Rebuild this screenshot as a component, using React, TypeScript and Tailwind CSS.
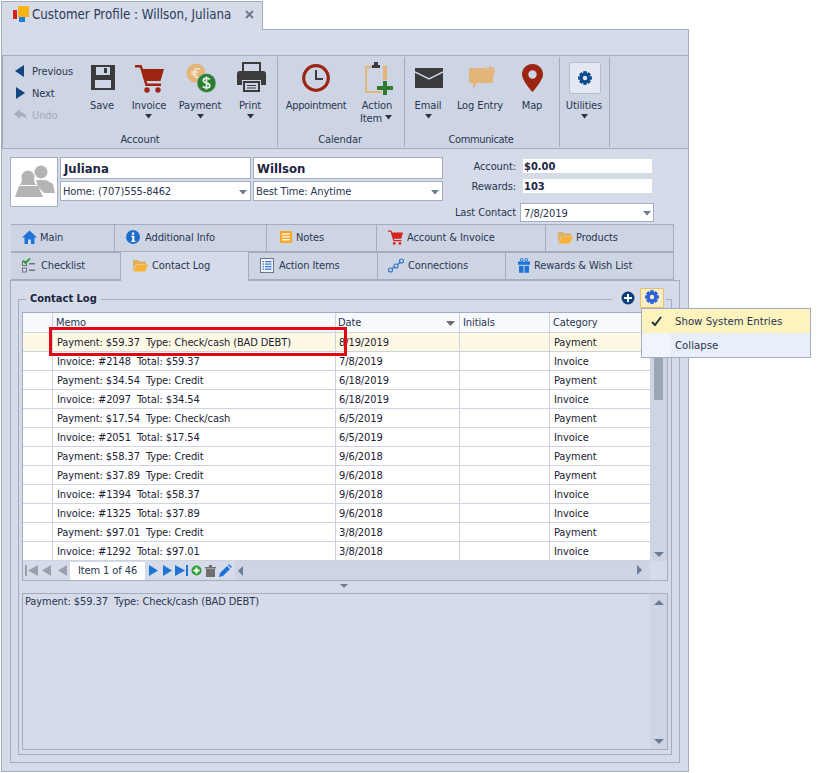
import React from "react";

const Svg = ({ x, y, w, h, children }: { x: number; y: number; w: number; h: number; children: React.ReactNode }) => (
  <svg className="absolute" style={{ left: x, top: y }} width={w} height={h} viewBox={`0 0 ${w} ${h}`}>
    {children}
  </svg>
);

const Gear = ({ x, y, s, c, hole }: { x: number; y: number; s: number; c: string; hole: string }) => {
  const teeth = [0, 45, 90, 135, 180, 225, 270, 315];
  return (
    <Svg x={x} y={y} w={s} h={s}>
      <g transform={`scale(${s / 16})`}>
        {teeth.map((a) => (
          <rect key={a} x="6.200" y="0.400" width="3.600" height="15.200" fill={c} transform={`rotate(${a} 8 8)`} />
        ))}
        <circle cx="8" cy="8" r="5.600" fill={c} />
        <circle cx="8" cy="8" r="2.500" fill={hole} />
      </g>
    </Svg>
  );
};

const Caret = ({ x, y }: { x: number; y: number }) => (
  <Svg x={x} y={y} w={9} h={5}>
    <path d="M1 0h7L4.500 4.500z" fill="#2a3346" />
  </Svg>
);

const DropCaret = ({ x, y }: { x: number; y: number }) => (
  <Svg x={x} y={y} w={9} h={5}>
    <path d="M0 0h8L4 4.500z" fill="#6d7b94" />
  </Svg>
);

const Label = ({ x, y, tight, children }: { x: number; y: number; tight?: boolean; children: React.ReactNode }) => (
  <div className={`absolute -translate-x-1/2 whitespace-nowrap leading-[14px] ${tight ? "tracking-[-0.35px]" : ""}`} style={{ left: x, top: y + 1 }}>
    {children}
  </div>
);

const rows: [string, string, string][] = [
  ["Invoice: #2148  Total: $59.37", "7/8/2019", "Invoice"],
  ["Payment: $34.54  Type: Credit", "6/18/2019", "Payment"],
  ["Invoice: #2097  Total: $34.54", "6/18/2019", "Invoice"],
  ["Payment: $17.54  Type: Check/cash", "6/5/2019", "Payment"],
  ["Invoice: #2051  Total: $17.54", "6/5/2019", "Invoice"],
  ["Payment: $58.37  Type: Credit", "9/6/2018", "Payment"],
  ["Payment: $37.89  Type: Credit", "9/6/2018", "Payment"],
  ["Invoice: #1394  Total: $58.37", "9/6/2018", "Invoice"],
  ["Invoice: #1325  Total: $37.89", "9/6/2018", "Invoice"],
  ["Payment: $97.01  Type: Credit", "3/8/2018", "Payment"],
  ["Invoice: #1292  Total: $97.01", "3/8/2018", "Invoice"],
];

const Row = ({ r, hi }: { r: [string, string, string]; hi?: boolean }) => (
  <div className={`grid h-[19px] grid-cols-[30px_283px_124px_90px_101px] border-b border-[#cdd3e0] leading-[19px] text-[#1b2233] ${hi ? "bg-[#fef9e4]" : "bg-white"}`}>
    <div className="border-r border-[#cdd3e0]" />
    <div className="whitespace-pre border-r border-[#cdd3e0] pl-[4px]">{r[0]}</div>
    <div className="border-r border-[#cdd3e0] pl-[3px]">{r[1]}</div>
    <div className="border-r border-[#cdd3e0]" />
    <div className="pl-[4px]">{r[2]}</div>
  </div>
);

const tabBase = "relative flex h-[28px] items-center border border-l-0 border-[#a3adbf] bg-[#cdd5e5] pb-[2px] text-[#2a3550]";
const tabText = "relative top-[1px]";

const House = () => (
  <svg width="15" height="14" viewBox="0 0 15 14"><path d="M7.500 0.500 15 7.500h-2.500V14H9V9.500H6V14H2.500V7.500H0z" fill="#1e73d6" /></svg>
);
const Info = () => (
  <svg width="14" height="14" viewBox="0 0 14 14"><circle cx="7" cy="7" r="7" fill="#1e6fc9" /><rect x="6" y="2.500" width="2.200" height="2.200" fill="#fff" /><path d="M5.300 5.800h3v5h1v1.200H5.300v-1.200h1v-3.800h-1z" fill="#fff" /></svg>
);
const Notes = () => (
  <svg width="12" height="12" viewBox="0 0 12 12"><rect width="12" height="12" fill="#f9a825" /><rect x="2" y="2.500" width="8" height="1.300" fill="#fff" /><rect x="2" y="5.300" width="8" height="1.300" fill="#fff" /><rect x="2" y="8.100" width="8" height="1.300" fill="#fff" /></svg>
);
const Cart = ({ s, c }: { s: number; c: string }) => (
  <svg width={s} height={s} viewBox="0 0 29 29">
    <path d="M0 1h6.500l1.500 4H29l-3.500 12H11.500l.8 2.500H26v2.400H10.500L5 3.500H0z" fill={c} />
    <circle cx="12" cy="26" r="2.700" fill={c} /><circle cx="23" cy="26" r="2.700" fill={c} />
  </svg>
);
const Folder = () => (
  <svg width="15" height="13" viewBox="0 0 15 13"><path d="M0 1h5l1.500 1.500H13V5H3L0 12z" fill="#e0b060" /><path d="M3.500 5.500H15L12 12.500H0.500z" fill="#f9b233" /></svg>
);
const Check = () => (
  <svg width="14" height="15" viewBox="0 0 14 15">
    <rect x="0.500" y="3.500" width="4" height="4" fill="none" stroke="#6f7682" /><rect x="0.500" y="10" width="4" height="4" fill="none" stroke="#6f7682" />
    <rect x="7" y="5" width="6" height="1.500" fill="#6f7682" /><rect x="7" y="11.500" width="6" height="1.500" fill="#6f7682" />
    <path d="M1 2.500l2.500 2.500L8 0.500" fill="none" stroke="#2e9e34" strokeWidth="1.800" />
  </svg>
);
const ListIcon = () => (
  <svg width="14" height="15" viewBox="0 0 14 15">
    <rect x="0.500" y="0.500" width="13" height="14" fill="#eef1f7" stroke="#6f7682" />
    {[3, 5.500, 8, 10.500].map((y) => (<g key={y}><rect x="2.500" y={y} width="1.500" height="1.200" fill="#3578c9" /><rect x="5" y={y} width="6.500" height="1.200" fill="#3578c9" /></g>))}
  </svg>
);
const Conn = () => (
  <svg width="16" height="15" viewBox="0 0 16 15" fill="none" stroke="#2f6fc0" strokeWidth="1.100">
    <circle cx="2.500" cy="12" r="2" /><circle cx="8" cy="8" r="2" /><circle cx="13.500" cy="3" r="2" /><path d="M4 10.500l2.500-1.500M9.500 6.500l2.500-2" />
  </svg>
);
const Gift = () => (
  <svg width="12" height="15" viewBox="0 0 12 15"><rect y="3.500" width="12" height="3.300" fill="#1e73d6" /><rect x="1" y="7.800" width="4.500" height="7" fill="#1e73d6" /><rect x="6.500" y="7.800" width="4.500" height="7" fill="#1e73d6" /><circle cx="3.700" cy="1.800" r="1.400" fill="none" stroke="#1e73d6" /><circle cx="8.300" cy="1.800" r="1.400" fill="none" stroke="#1e73d6" /></svg>
);

const Tri = ({ dir, c, bar }: { dir: "l" | "r"; c: string; bar?: boolean }) => (
  <svg width={bar ? 13 : 11} height="13" viewBox={`0 0 ${bar ? 13 : 11} 13`}>
    {dir === "l" ? (
      <>
        {bar && <rect x="0" y="1" width="2" height="11" fill={c} />}
        <path d={bar ? "M13 1v11L3 6.500z" : "M10 1v11L1 6.500z"} fill={c} />
      </>
    ) : (
      <>
        <path d={bar ? "M0 1v11l10-5.500z" : "M1 1v11l9-5.500z"} fill={c} />
        {bar && <rect x="11" y="1" width="2" height="11" fill={c} />}
      </>
    )}
  </svg>
);

export default function App() {
  return (
    <div className="relative h-[773px] w-[830px] overflow-hidden bg-white [font-family:DejaVu_Sans_Condensed,DejaVu_Sans,sans-serif] text-[11px] tracking-[-0.1px] text-[#2a3550]">
      {/* window */}
      <div className="absolute left-[1px] top-[29px] h-[743px] w-[688px] border border-[#a3adbf] bg-[#d5dbe9]" />
      {/* title tab */}
      <div className="absolute left-[1px] top-[1px] flex h-[29px] w-[262px] items-center border border-b-0 border-[#a3adbf] bg-[#d5dbe9] pb-[2px] pl-[30px] text-[13.200px] tracking-normal text-[#2c3a58]">
        <span>Customer Profile : Willson, Juliana</span>
      </div>
      <Svg x={13} y={6} w={17} h={17}>
        <rect x="0" y="4" width="4" height="9" fill="#d4231c" /><rect x="5" y="0" width="11" height="11" fill="#fcb316" /><rect x="6" y="11" width="6" height="5" fill="#1f7fd8" />
      </Svg>
      <Svg x={245} y={10} w={10} h={10}>
        <path d="M1 1l7 7M8 1l-7 7" stroke="#6f7a8f" strokeWidth="2" />
      </Svg>

      {/* ribbon */}
      <div className="absolute left-[2px] top-[55px] h-[94px] w-[686px] border-y border-[#a3adbf] bg-[#cdd5e5]" />
      <div className="absolute left-[2px] top-[56px] h-[92px] w-[1px] bg-[#a3adbf]" />
      <div className="absolute left-[277px] top-[57px] h-[90px] w-[1px] bg-[#a3adbf]" />
      <div className="absolute left-[404px] top-[57px] h-[90px] w-[1px] bg-[#a3adbf]" />
      <div className="absolute left-[559px] top-[57px] h-[90px] w-[1px] bg-[#a3adbf]" />
      <div className="absolute left-[609px] top-[57px] h-[90px] w-[1px] bg-[#a3adbf]" />

      <Svg x={15} y={65} w={10} h={12}><path d="M9 0v12L0 6z" fill="#13467f" /></Svg>
      <div className="absolute left-[32px] top-[65px] leading-[14px]">Previous</div>
      <Svg x={16} y={87} w={10} h={12}><path d="M0 0v12l9-6z" fill="#13467f" /></Svg>
      <div className="absolute left-[32px] top-[87px] leading-[14px]">Next</div>
      <Svg x={14} y={109} w={13} h={11}><path d="M6 0v3c4 0 6 3 7 7-2-2-4-3-7-3v3L0 5z" fill="#a6adbb" /></Svg>
      <div className="absolute left-[32px] top-[109px] leading-[14px] text-[#a0a8b8]">Undo</div>

      {/* Save */}
      <Svg x={91} y={65} w={24} h={25}>
        <path d="M0 0h24v25H0z" fill="#3b3b3b" /><rect x="5" y="2" width="14" height="8" fill="#cdd5e5" /><rect x="13" y="3" width="3" height="5" fill="#3b3b3b" /><rect x="4" y="15" width="16" height="8" fill="#cdd5e5" />
      </Svg>
      <Label x={102} y={98}>Save</Label>
      {/* Invoice */}
      <div className="absolute left-[135px] top-[64px]"><Cart s={29} c="#9c2410" /></div>
      <Label x={149} y={98}>Invoice</Label>
      <Caret x={144} y={114} />
      {/* Payment */}
      <Svg x={186} y={63} w={30} h={30}>
        <circle cx="10" cy="10" r="9.500" fill="#e2b578" /><path d="M14 6c-3-1.500-6 0-6 4s3 5.500 6 4M5 9h7M5 11.500h6" fill="none" stroke="#f4e8d4" strokeWidth="1.500" />
        <circle cx="20.500" cy="20" r="9.500" fill="#2d7d32" stroke="#cdd5e5" strokeWidth="0.500" />
        <path d="M24 16.500c-1-1-2-1.300-3.500-1.300-2 0-3.200 1-3.200 2.400 0 3.200 6.500 1.800 6.500 4.900 0 1.400-1.300 2.400-3.300 2.400-1.600 0-2.900-.5-3.800-1.500M20.500 13.500v13" fill="none" stroke="#e7f1e8" strokeWidth="1.700" />
      </Svg>
      <Label x={200} y={98}>Payment</Label>
      <Caret x={196} y={114} />
      {/* Print */}
      <Svg x={237} y={62} w={29} h={30}>
        <path d="M5 0h19v9h-2V2H7v7H5z" fill="#3b3b3b" />
        <path d="M3 9h23a3 3 0 0 1 3 3v11h-5v-5H5v5H0V12a3 3 0 0 1 3-3z" fill="#3b3b3b" />
        <path d="M6 19h17v11H6z" fill="#3b3b3b" /><rect x="8" y="21" width="13" height="7" fill="#cdd5e5" /><rect x="10" y="23" width="9" height="1" fill="#3b3b3b" /><rect x="10" y="25.500" width="9" height="1" fill="#3b3b3b" />
      </Svg>
      <Label x={250} y={98}>Print</Label>
      <Caret x={246} y={114} />
      {/* Appointment */}
      <Svg x={302} y={64} w={28} h={28}>
        <circle cx="14" cy="14" r="12.300" fill="none" stroke="#9c2410" strokeWidth="3.200" />
        <path d="M14 6v9h7" fill="none" stroke="#3b3b3b" strokeWidth="2" />
      </Svg>
      <Label x={316} y={98} tight>Appointment</Label>
      {/* Action item */}
      <Svg x={365} y={62} w={28} h={33}>
        <path d="M0 4h7v2H2v23h15v2H0z" fill="#e2b578" /><path d="M18 4h4v14h-4z" fill="#e2b578" />
        <path d="M7 6V3h2V0h4v3h2v3z" fill="#3b3b3b" />
        <path d="M18 19h4v5h6v4h-6v5h-4v-5h-6v-4h6z" fill="#2d7d32" />
      </Svg>
      <Label x={377} y={98}>Action</Label>
      <Label x={371} y={111}>Item</Label>
      <Caret x={384} y={115} />
      {/* Email */}
      <Svg x={415} y={68} w={28} h={20}>
        <path d="M0 0h28v20H0z" fill="#3b3b3b" /><path d="M0 4l14 7 14-7" fill="none" stroke="#cdd5e5" strokeWidth="1.500" />
      </Svg>
      <Label x={428} y={98}>Email</Label>
      <Caret x={424} y={114} />
      {/* Log entry */}
      <Svg x={469} y={65} w={28} h={25}>
        <path d="M0 3h16c0 5 3 7 8 7v8H8l-4 6v-6H0z" fill="#e2b578" />
        <path d="M21 0l1.500 3 3-1-1 3 3 1.500-3 1.500 1 3-3-1L21 13l-1.500-3-3 1 1-3-3-1.500 3-1.500-1-3 3 1z" fill="#e2b578" />
      </Svg>
      <Label x={480} y={98}>Log Entry</Label>
      {/* Map */}
      <Svg x={522} y={64} w={21} h={28}>
        <path fillRule="evenodd" d="M10.500 0C4.700 0 0 4.500 0 10.300 0 17 10.500 28 10.500 28S21 17 21 10.300C21 4.500 16.300 0 10.500 0zm0 6.300a4.200 4.200 0 1 1 0 8.400 4.200 4.200 0 0 1 0-8.400z" fill="#9c2410" />
      </Svg>
      <Label x={532} y={98}>Map</Label>
      {/* Utilities */}
      <div className="absolute left-[569px] top-[62px] h-[32px] w-[32px] rounded-[2px] border border-[#b8bfca] bg-[#e3e8f2]" />
      <Gear x={578} y={71} s={14} c="#0f4c92" hole="#e3e8f2" />
      <Label x={584} y={98}>Utilities</Label>
      <Caret x={580} y={114} />

      <Label x={140} y={132}>Account</Label>
      <Label x={340} y={132}>Calendar</Label>
      <Label x={481} y={132} tight>Communicate</Label>

      {/* customer */}
      <div className="absolute left-[10px] top-[157px] h-[50px] w-[48px] border border-[#a3adbf] bg-white">
        <svg className="absolute left-[3px] top-[5px]" width="41" height="37" viewBox="0 0 41 37">
          <circle cx="27" cy="9" r="6.500" fill="#b4b4b4" /><path d="M22 17h10l7 4 2 9H30l-6-6z" fill="#b4b4b4" />
          <circle cx="14" cy="14" r="6.500" fill="#b4b4b4" /><path d="M8 15c0 4-1 6-3 7h18c-2-1-3-3-3-7z" fill="#b4b4b4" /><path d="M5 23h19l5 11H1z" fill="#b4b4b4" />
        </svg>
      </div>
      <div className="absolute left-[60px] top-[157px] h-[22px] w-[191px] border border-[#a3adbf] bg-white pl-[3px] text-[13px] font-bold leading-[21px] tracking-normal text-[#1c2540]">Juliana</div>
      <div className="absolute left-[253px] top-[157px] h-[22px] w-[190px] border border-[#a3adbf] bg-white pl-[3px] text-[13px] font-bold leading-[21px] tracking-normal text-[#1c2540]">Willson</div>
      <div className="absolute left-[60px] top-[181px] h-[20px] w-[191px] border border-[#a3adbf] bg-white pl-[2px] leading-[20px]">Home: (707)555-8462</div>
      <DropCaret x={239} y={190} />
      <div className="absolute left-[253px] top-[181px] h-[20px] w-[190px] border border-[#a3adbf] bg-white pl-[2px] leading-[20px]">Best Time: Anytime</div>
      <DropCaret x={431} y={190} />

      <div className="absolute right-[314px] top-[160px] leading-[14px]">Account:</div>
      <div className="absolute left-[523px] top-[159px] h-[14px] w-[129px] bg-white pl-[1px] font-bold leading-[15px] tracking-normal text-[#1c2540]">$0.00</div>
      <div className="absolute right-[314px] top-[180px] leading-[14px]">Rewards:</div>
      <div className="absolute left-[523px] top-[179px] h-[14px] w-[129px] bg-white pl-[1px] font-bold leading-[15px] tracking-normal text-[#1c2540]">103</div>
      <div className="absolute right-[314px] top-[206px] leading-[14px]">Last Contact</div>
      <div className="absolute left-[520px] top-[203px] h-[19px] w-[134px] border border-[#a3adbf] bg-white pl-[3px] leading-[19px]">7/8/2019</div>
      <DropCaret x={643} y={211} />

      {/* tabs */}
      <div className="absolute left-[11px] top-[224px] flex w-[663px] flex-col">
        <div className="flex">
          <div className={`${tabBase} w-[104px] border-l pl-[11px]`}><House /><span className={`${tabText} ml-[3px]`}>Main</span></div>
          <div className={`${tabBase} w-[152px] pl-[11px]`}><Info /><span className={`${tabText} ml-[5px]`}>Additional Info</span></div>
          <div className={`${tabBase} w-[110px] pl-[13px]`}><Notes /><span className={`${tabText} ml-[4px]`}>Notes</span></div>
          <div className={`${tabBase} w-[169px] pl-[11px]`}><Cart s={15} c="#d6251c" /><span className={`${tabText} ml-[4px]`}>Account & Invoice</span></div>
          <div className={`${tabBase} w-[128px] pl-[12px]`}><Folder /><span className={`${tabText} ml-[3px]`}>Products</span></div>
        </div>
        <div className="flex">
          <div className={`${tabBase} w-[110px] border-l pl-[11px]`}><Check /><span className={`${tabText} ml-[5px]`}>Checklist</span></div>
          <div className="relative z-10 flex h-[29px] w-[128px] items-center border-r border-[#a3adbf] bg-[#d5dbe9] pb-[3px] pl-[12px]"><Folder /><span className={`${tabText} ml-[4px]`}>Contact Log</span></div>
          <div className={`${tabBase} w-[129px] pl-[11px]`}><ListIcon /><span className={`${tabText} ml-[5px]`}>Action Items</span></div>
          <div className={`${tabBase} w-[128px] pl-[10px]`}><Conn /><span className={`${tabText} ml-[4px]`}>Connections</span></div>
          <div className={`${tabBase} w-[168px] pl-[12px]`}><Gift /><span className={`${tabText} ml-[4px]`}>Rewards & Wish List</span></div>
        </div>
      </div>

      {/* tab page */}
      <div className="absolute left-[10px] top-[280px] h-[483px] w-[670px] border border-[#a3adbf]" />
      <div className="absolute left-[121px] top-[280px] z-10 h-[2px] w-[127px] bg-[#d5dbe9]" />

      {/* group box */}
      <div className="absolute left-[18px] top-[299px] h-[456px] w-[654px] border border-[#a3adbf]" />
      <div className="absolute left-[26px] top-[292px] h-[14px] bg-[#d5dbe9] px-[4px] font-bold leading-[13px] tracking-normal text-[#1c2540]">Contact Log</div>
      <div className="absolute left-[612px] top-[292px] h-[14px] w-[54px] bg-[#d5dbe9]" />
      <Svg x={621} y={291} w={14} h={14}>
        <circle cx="7" cy="7" r="6.500" fill="#0f3d78" /><path d="M6 3h2v3h3v2H8v3H6V8H3V6h3z" fill="#fff" />
      </Svg>
      <div className="absolute left-[640px] top-[288px] h-[20px] w-[24px] border border-[#e5c36d] bg-[#f6ecc8]" />
      <Gear x={645} y={290} s={14} c="#2e62d9" hole="#f6ecc8" />

      {/* table */}
      <div className="absolute left-[22px] top-[312px] h-[269px] w-[646px] overflow-hidden border border-[#a3adbf] bg-white">
        <div className="grid h-[20px] grid-cols-[30px_283px_124px_90px_101px] border-b border-[#cdd3e0] bg-[#f7f9fd] leading-[20px]">
          <div className="border-r border-[#cdd3e0]" />
          <div className="border-r border-[#cdd3e0] pl-[3px]">Memo</div>
          <div className="border-r border-[#cdd3e0] pl-[2px]">Date</div>
          <div className="border-r border-[#cdd3e0] pl-[3px]">Initials</div>
          <div className="pl-[3px]">Category</div>
        </div>
        <Svg x={423} y={8} w={10} h={6}><path d="M0 0h9L4.500 5z" fill="#6d6d6d" /></Svg>
        <Row hi r={["Payment: $59.37  Type: Check/cash (BAD DEBT)", "8/19/2019", "Payment"]} />
        {rows.map((r, i) => (
          <Row key={i} r={r} />
        ))}
        {/* nav bar */}
        <div className="absolute bottom-0 left-0 flex h-[19px] w-[628px] items-center bg-[linear-gradient(to_right,#d5dbe9_212px,#cdd5e5_212px)] pl-[2px]">
          <Tri dir="l" c="#9aa1ad" bar />
          <span className="ml-[3px]"><Tri dir="l" c="#9aa1ad" /></span>
          <span className="ml-[5px]"><Tri dir="l" c="#9aa1ad" /></span>
          <div className="ml-[2px] flex h-[18px] w-[75px] items-center justify-center bg-white pt-[1px]">Item 1 of 46</div>
          <span className="ml-[3px]"><Tri dir="r" c="#1e73d6" /></span>
          <span className="ml-[3px]"><Tri dir="r" c="#1e73d6" /></span>
          <span className="ml-[2px]"><Tri dir="r" c="#1e73d6" bar /></span>
          <svg className="ml-[3px]" width="11" height="11" viewBox="0 0 11 11"><circle cx="5.500" cy="5.500" r="5" fill="#2e9e34" /><path d="M4.500 2.500h2v2h2v2h-2v2h-2v-2h-2v-2h2z" fill="#fff" /></svg>
          <svg className="ml-[3px]" width="11" height="12" viewBox="0 0 11 12"><path d="M0 2h11v1.500H0zM4 0h3v2H4zM1 4h9v8H1z" fill="#6f6f6f" /></svg>
          <svg className="ml-[3px]" width="13" height="13" viewBox="0 0 13 13"><path d="M0 13l1-4 7-7 3 3-7 7zM9 1l1-1 3 3-1 1z" fill="#1e73d6" /></svg>
          <svg className="ml-[6px]" width="6" height="10" viewBox="0 0 6 10"><path d="M5 0v10L0 5z" fill="#6d7b94" /></svg>
        </div>
        <Svg x={614} y={252} w={6} h={10}><path d="M0 0v10l5-5z" fill="#6d7b94" /></Svg>
        {/* scrollbar */}
        <div className="absolute right-0 top-0 h-full w-[17px] bg-[#cdd5e5]" />
        <div className="absolute bottom-0 right-0 h-[19px] w-[17px] bg-[#d5dbe9]" />
        <div className="absolute right-[4px] top-[44px] h-[43px] w-[9px] bg-[#9aa5b5]" />
        <Svg x={631} y={239} w={10} h={6}><path d="M0 0h10L5 5z" fill="#6d7b94" /></Svg>
      </div>

      {/* splitter */}
      <Svg x={340} y={584} w={8} h={5}><path d="M0 0h8L4 4z" fill="#6d7b94" /></Svg>

      {/* memo */}
      <div className="absolute left-[22px] top-[593px] h-[157px] w-[646px] border border-[#a3adbf] pl-[2px] pt-[1px] leading-[14px] text-[#2a3550]">
        Payment: $59.37&nbsp; Type: Check/cash (BAD DEBT)
        <div className="absolute right-0 top-0 h-full w-[17px] bg-[#cdd5e5]" />
        <Svg x={631} y={6} w={10} h={6}><path d="M5 0l5 5H0z" fill="#6d7b94" /></Svg>
        <Svg x={631} y={145} w={10} h={6}><path d="M0 0h10L5 5z" fill="#6d7b94" /></Svg>
      </div>

      {/* red highlight */}
      <div className="absolute left-[49px] top-[327px] z-20 h-[29px] w-[298px] border-[3px] border-[#e30613]" />

      {/* menu */}
      <div className="absolute left-[641px] top-[308px] z-30 h-[50px] w-[170px] border border-[#a3adbf] bg-[#e9eefb]">
        <div className="flex h-[24px] items-center bg-[#fdf3bd] pl-[33px] pt-[3px] text-[11.300px] tracking-normal text-[#2a3550]">Show System Entries</div>
        <div className="flex h-[24px] items-center bg-[linear-gradient(to_right,#f0f4fd_28px,#e9eefb_28px)] pl-[33px] pt-[3px] text-[11.300px] tracking-normal text-[#2a3550]">Collapse</div>
        <svg className="absolute left-[9px] top-[7px]" width="12" height="11" viewBox="0 0 12 11"><path d="M1 6l3 3 6-8" fill="none" stroke="#2b3038" strokeWidth="2" /></svg>
      </div>
    </div>
  );
}
